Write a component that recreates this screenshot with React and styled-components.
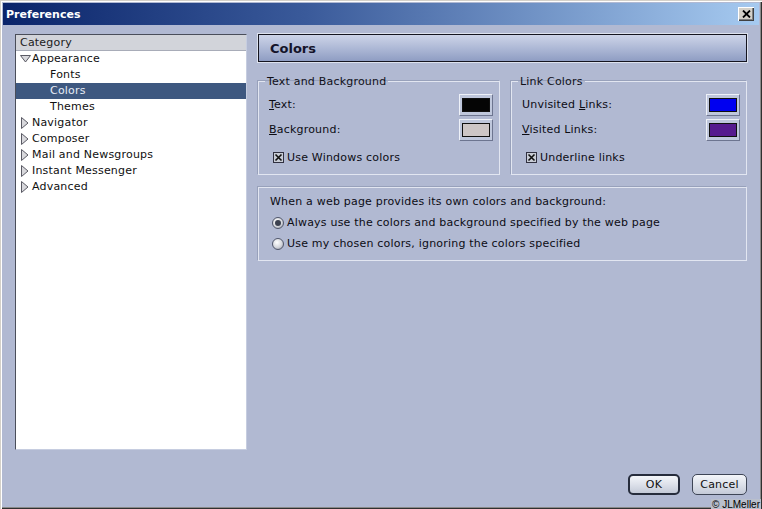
import React from 'react';
import styled, { createGlobalStyle } from 'styled-components';

const GlobalStyle = createGlobalStyle`
  html, body { margin: 0; padding: 0; }
  body {
    width: 762px;
    height: 509px;
    overflow: hidden;
    background: #b1b9d2;
    font-family: "DejaVu Sans", Verdana, sans-serif;
    font-size: 11px;
    letter-spacing: 0.2px;
    color: #0c0c14;
  }
`;

const Window = styled.div`
  position: relative;
  width: 762px;
  height: 509px;
  box-sizing: border-box;
  padding: 3px;
  background: #b1b9d2;
  display: flex;
  flex-direction: column;
  box-shadow: inset 1px 1px 0 #d4d0c8, inset 2px 2px 0 #ffffff,
    inset -1px -1px 0 #303030, inset -2px -2px 0 #8a8a8a;
`;

const TitleBar = styled.div`
  height: 22px;
  display: flex;
  align-items: center;
  justify-content: space-between;
  padding: 0 5px 0 3px;
  background: linear-gradient(90deg, #0a246a 0%, #3a5a9a 40%, #a6caf0 100%);
`;

const Title = styled.span`
  color: #fff;
  font-weight: bold;
  font-size: 11px;
  letter-spacing: 0;
`;

const CloseButton = styled.div`
  width: 16px;
  height: 14px;
  background: #d4d0c8;
  box-shadow: inset 1px 1px 0 #fff, inset -1px -1px 0 #404040, inset -2px -2px 0 #808080;
  display: flex;
  align-items: center;
  justify-content: center;
`;

const Body = styled.div`
  flex: 1;
  display: flex;
  flex-direction: column;
  padding: 9px 12px 0 12px;
`;

const Main = styled.div`
  height: 416px;
  display: flex;
  gap: 11px;
`;

const Tree = styled.div`
  width: 232px;
  box-sizing: border-box;
  background: #fff;
  border: 1px solid;
  border-color: #4a4e5a #c6cde0 #c6cde0 #4a4e5a;
`;

const TreeHeader = styled.div`
  height: 15px;
  line-height: 15px;
  padding-left: 4px;
  background: #d2d4da;
  border-bottom: 1px solid #a8acb8;
  color: #202020;
`;

const Row = styled.div`
  height: 16px;
  line-height: 16px;
  display: flex;
  align-items: center;
  padding-left: ${p => (p.$child ? 34 : 2)}px;
  background: ${p => (p.$selected ? '#3e5880' : 'transparent')};
  color: ${p => (p.$selected ? '#e6ecf6' : '#101010')};
`;

const Twisty = styled.span`
  width: 14px;
  height: 16px;
  display: inline-flex;
  align-items: center;
  justify-content: center;
`;

const Right = styled.div`
  flex: 1;
  display: flex;
  flex-direction: column;
`;

const Header = styled.div`
  height: 28px;
  box-sizing: border-box;
  border: 1px solid #15151f;
  background: linear-gradient(180deg, #cdd4e8 0%, #aeb9d6 50%, #8f9dc3 100%);
  box-shadow: 0 0 0 1px #dde2ee;
  display: flex;
  align-items: center;
  padding-left: 11px;
  font-weight: bold;
  font-size: 13px;
  letter-spacing: 0;
  color: #14142a;
`;

const Groups = styled.div`
  margin-top: 13px;
  display: grid;
  grid-template-columns: 242px 236px;
  gap: 11px;
`;

const Group = styled.fieldset`
  margin: 0;
  height: 100px;
  box-sizing: border-box;
  padding: 4px 6px 0 10px;
  border: 1px solid #e2e6f1;
  box-shadow: -1px -1px 0 #98a1bb;
  min-width: 0;
  & > legend {
    padding: 0 2px;
    margin-left: -4px;
    line-height: 13px;
    color: #101018;
  }
`;

const FieldRow = styled.div`
  height: 25px;
  display: flex;
  align-items: center;
  justify-content: space-between;
`;

const U = styled.span`
  text-decoration: underline;
`;

const ColorButton = styled.div`
  width: 34px;
  height: 22px;
  box-sizing: border-box;
  background: #bfc7dc;
  border: 1px solid;
  border-color: #eef1f8 #6d7590 #6d7590 #eef1f8;
  display: flex;
  align-items: center;
  justify-content: center;
`;

const Swatch = styled.div`
  width: 28px;
  height: 14px;
  box-sizing: border-box;
  border: 1px solid #101010;
  background: ${p => p.$color};
`;

const CheckRow = styled.label`
  display: flex;
  align-items: center;
  gap: 3px;
  margin-top: 7px;
  padding-left: 4px;
  height: 16px;
`;

const Check = styled.span`
  width: 11px;
  height: 11px;
  box-sizing: border-box;
  border: 1px solid #303040;
  background: #c8ccd6;
  display: inline-flex;
  align-items: center;
  justify-content: center;
`;

const Box = styled.div`
  margin-top: 12px;
  height: 74px;
  box-sizing: border-box;
  border: 1px solid #e2e6f1;
  box-shadow: -1px -1px 0 #98a1bb;
  padding: 6px 11px 0 11px;
`;

const BoxText = styled.div`
  height: 18px;
  line-height: 16px;
`;

const RadioRow = styled.div`
  display: flex;
  align-items: center;
  gap: 3px;
  height: 21px;
  padding-left: 2px;
`;

const Radio = styled.span`
  width: 12px;
  height: 12px;
  box-sizing: border-box;
  border-radius: 50%;
  border: 1px solid #50566a;
  background: radial-gradient(circle at 40% 35%, #ffffff 0%, #d4d6dc 55%, #8c90a0 100%);
  display: inline-flex;
  align-items: center;
  justify-content: center;
  &::after {
    content: '';
    width: 6px;
    height: 6px;
    border-radius: 50%;
    background: ${p => (p.$checked ? '#3c4150' : 'transparent')};
  }
`;

const Footer = styled.div`
  margin-top: 24px;
  display: flex;
  justify-content: flex-end;
  gap: 12px;
`;

const Button = styled.div`
  width: ${p => p.$w}px;
  height: 21px;
  box-sizing: border-box;
  border-radius: 5px;
  border: ${p => (p.$default ? '2px solid #262c3c' : '1px solid #3e4556')};
  background: linear-gradient(180deg, #f4f6fa 0%, #dde1ea 50%, #c4cad8 100%);
  display: flex;
  align-items: center;
  justify-content: center;
  color: #101010;
`;

const Credit = styled.div`
  position: absolute;
  right: 1px;
  bottom: -1px;
  font-family: "Liberation Sans", Arial, sans-serif;
  font-size: 10px;
  letter-spacing: 0;
  color: #000;
  background: #b9bfcc;
  padding: 0 1px;
  line-height: 11px;
`;

const Down = () => (
  <svg width="11" height="8" viewBox="0 0 11 8">
    <path d="M0.5 0.5 H10.5 L5.5 7 Z" fill="#d8d8dc" stroke="#5a5a64" strokeWidth="1" />
  </svg>
);

const RightArrow = () => (
  <svg width="8" height="12" viewBox="0 0 8 12">
    <path d="M0.5 0.5 L7 6 L0.5 11.5 Z" fill="#d8d8dc" stroke="#5a5a64" strokeWidth="1" />
  </svg>
);

const CheckMark = () => (
  <svg width="9" height="9" viewBox="0 0 9 9">
    <path d="M1.5 1.5 L7.5 7.5 M7.5 1.5 L1.5 7.5" stroke="#101010" strokeWidth="1.6" />
  </svg>
);

const categories = [
  { label: 'Appearance', open: true },
  { label: 'Fonts', child: true },
  { label: 'Colors', child: true, selected: true },
  { label: 'Themes', child: true },
  { label: 'Navigator' },
  { label: 'Composer' },
  { label: 'Mail and Newsgroups' },
  { label: 'Instant Messenger' },
  { label: 'Advanced' },
];

const App = () => {
  return (
    <Window>
      <GlobalStyle />
      <TitleBar>
        <Title>Preferences</Title>
        <CloseButton>
          <svg width="9" height="8" viewBox="0 0 9 8">
            <path d="M1 0.5 L8 7.5 M8 0.5 L1 7.5" stroke="#000" strokeWidth="1.8" />
          </svg>
        </CloseButton>
      </TitleBar>
      <Body>
        <Main>
          <Tree>
            <TreeHeader>Category</TreeHeader>
            {categories.map(c => (
              <Row key={c.label} $child={c.child} $selected={c.selected}>
                {!c.child && <Twisty>{c.open ? <Down /> : <RightArrow />}</Twisty>}
                {c.label}
              </Row>
            ))}
          </Tree>
          <Right>
            <Header>Colors</Header>
            <Groups>
              <Group>
                <legend>Text and Background</legend>
                <FieldRow>
                  <span><U>T</U>ext:</span>
                  <ColorButton><Swatch $color="#050505" /></ColorButton>
                </FieldRow>
                <FieldRow>
                  <span><U>B</U>ackground:</span>
                  <ColorButton><Swatch $color="#cdc6c6" /></ColorButton>
                </FieldRow>
                <CheckRow>
                  <Check><CheckMark /></Check>
                  Use Windows colors
                </CheckRow>
              </Group>
              <Group>
                <legend>Link Colors</legend>
                <FieldRow>
                  <span>Unvisited <U>L</U>inks:</span>
                  <ColorButton><Swatch $color="#0000f0" /></ColorButton>
                </FieldRow>
                <FieldRow>
                  <span><U>V</U>isited Links:</span>
                  <ColorButton><Swatch $color="#561a8e" /></ColorButton>
                </FieldRow>
                <CheckRow>
                  <Check><CheckMark /></Check>
                  Underline links
                </CheckRow>
              </Group>
            </Groups>
            <Box>
              <BoxText>When a web page provides its own colors and background:</BoxText>
              <RadioRow>
                <Radio $checked />
                Always use the colors and background specified by the web page
              </RadioRow>
              <RadioRow>
                <Radio />
                Use my chosen colors, ignoring the colors specified
              </RadioRow>
            </Box>
          </Right>
        </Main>
        <Footer>
          <Button $w={52} $default>OK</Button>
          <Button $w={55}>Cancel</Button>
        </Footer>
      </Body>
      <Credit>© JLMeller</Credit>
    </Window>
  );
};

export default App;
